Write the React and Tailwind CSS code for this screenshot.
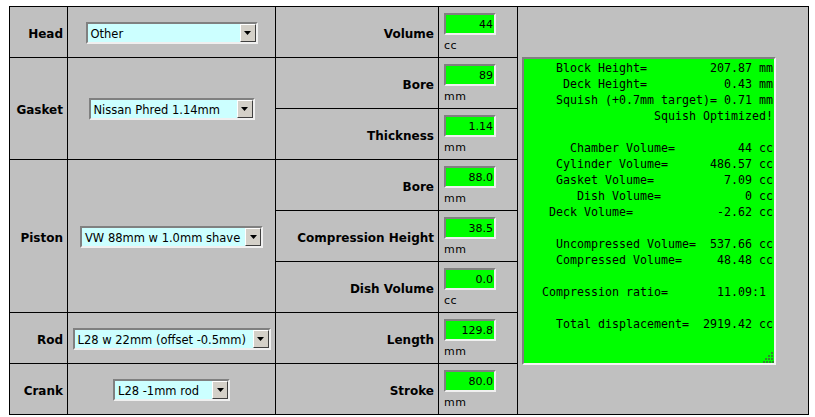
import React from "react";

const LINES = [
  [[2, "Block Height="], [24, "207.87 mm"]],
  [[3, "Deck Height="], [26, "0.43 mm"]],
  [[2, "Squish (+0.7mm target)= 0.71 mm"]],
  [[16, "Squish Optimized!"]],
  [],
  [[4, "Chamber Volume="], [28, "44 cc"]],
  [[2, "Cylinder Volume="], [24, "486.57 cc"]],
  [[2, "Gasket Volume="], [26, "7.09 cc"]],
  [[5, "Dish Volume="], [29, "0 cc"]],
  [[1, "Deck Volume="], [25, "-2.62 cc"]],
  [],
  [[2, "Uncompressed Volume="], [24, "537.66 cc"]],
  [[2, "Compressed Volume="], [25, "48.48 cc"]],
  [],
  [[0, "Compression ratio="], [25, "11.09:1"]],
  [],
  [[2, "Total displacement="], [23, "2919.42 cc"]],
];

function buildLine(parts) {
  let s = "";
  for (const [col, text] of parts) {
    while (s.length < col) s += " ";
    s += text;
  }
  return s || " ";
}

function Select({ text, width }) {
  return (
    <div
      className="flex h-[22px] border-2 border-t-[#808080] border-l-[#808080] border-b-[#f0f0f0] border-r-[#f0f0f0] bg-[#ccffff]"
      style={{ width }}
    >
      <div className="flex-1 pl-[3px] pt-[2px] text-[11.5px] leading-[16px] font-['DejaVu_Sans',sans-serif] text-black whitespace-nowrap overflow-hidden">
        {text}
      </div>
      <div className="w-[16px] h-[18px] bg-[#d4d0c8] border border-t-[#ffffff] border-l-[#ffffff] border-b-[#404040] border-r-[#404040] flex items-center justify-center">
        <svg width="7" height="4" viewBox="0 0 7 4">
          <polygon points="0,0 7,0 3.5,4" fill="#000" />
        </svg>
      </div>
    </div>
  );
}

function Label({ children, className = "" }) {
  return (
    <div
      className={
        "bg-[#c0c0c0] flex items-center justify-end pr-[4px] pt-[3px] text-[12px] font-bold font-['DejaVu_Sans',sans-serif] text-black whitespace-nowrap " +
        className
      }
    >
      {children}
    </div>
  );
}

function SelCell({ text, width, className = "" }) {
  return (
    <div className={"bg-[#c0c0c0] flex items-center justify-center pt-px " + className}>
      <Select text={text} width={width} />
    </div>
  );
}

function Val({ value, unit, className = "" }) {
  return (
    <div className={"bg-[#c0c0c0] flex flex-col pl-[5px] pt-[6px] " + className}>
      <div className="w-[52px] h-[22px] bg-[#00ff00] border-2 border-t-[#808080] border-l-[#808080] border-b-[#f0f0f0] border-r-[#f0f0f0] text-right pr-[1px] pt-[2px] text-[11px] leading-[16px] font-['DejaVu_Sans',sans-serif] text-black">
        {value}
      </div>
      <div className="mt-[4px] text-[11px] leading-[14px] font-['DejaVu_Sans',sans-serif] text-black tracking-[0.5px]">
        {unit}
      </div>
    </div>
  );
}

export default function App() {
  return (
    <div className="bg-white w-[815px] h-[417px] pt-[6px] pl-[9px]">
      <div className="grid w-[800px] bg-black p-px gap-px grid-cols-[57px_207px_162px_78px_290px] grid-rows-[repeat(8,50px)]">
        <Label className="col-start-1 row-start-1">Head</Label>
        <SelCell className="col-start-2 row-start-1" text="Other" width={172} />
        <Label className="col-start-3 row-start-1">Volume</Label>
        <Val className="col-start-4 row-start-1" value="44" unit="cc" />

        <div className="col-start-5 row-start-1 row-span-8 bg-[#c0c0c0] flex items-center pl-[4px]">
          <div className="relative w-[254px] h-[308px] bg-[#00ff00] border-2 border-t-[#808080] border-l-[#808080] border-b-[#f4f4f4] border-r-[#f4f4f4] overflow-hidden">
            <div className="pl-[18px] pt-px text-[11.63px] leading-[16px] font-['DejaVu_Sans_Mono',monospace] text-black whitespace-pre">
              {LINES.map((l, i) => (
                <div key={i} className="h-[16px]">{buildLine(l)}</div>
              ))}
            </div>
            <svg className="absolute right-0 bottom-0" width="12" height="12" viewBox="0 0 12 12">
              <rect x="9" y="1" width="2" height="2" fill="#2e8b2e" />
              <rect x="6" y="4" width="2" height="2" fill="#2e8b2e" />
              <rect x="9" y="4" width="2" height="2" fill="#2e8b2e" />
              <rect x="3" y="7" width="2" height="2" fill="#2e8b2e" />
              <rect x="6" y="7" width="2" height="2" fill="#2e8b2e" />
              <rect x="9" y="7" width="2" height="2" fill="#2e8b2e" />
              <rect x="1" y="10" width="2" height="2" fill="#2e8b2e" />
              <rect x="4" y="10" width="2" height="2" fill="#2e8b2e" />
              <rect x="7" y="10" width="2" height="2" fill="#2e8b2e" />
              <rect x="10" y="10" width="2" height="2" fill="#2e8b2e" />
            </svg>
          </div>
        </div>

        <Label className="col-start-1 row-start-2 row-span-2">Gasket</Label>
        <SelCell className="col-start-2 row-start-2 row-span-2" text="Nissan Phred 1.14mm" width={166} />
        <Label className="col-start-3 row-start-2">Bore</Label>
        <Val className="col-start-4 row-start-2" value="89" unit="mm" />
        <Label className="col-start-3 row-start-3">Thickness</Label>
        <Val className="col-start-4 row-start-3" value="1.14" unit="mm" />

        <Label className="col-start-1 row-start-4 row-span-3">Piston</Label>
        <SelCell className="col-start-2 row-start-4 row-span-3" text="VW 88mm w 1.0mm shave" width={183} />
        <Label className="col-start-3 row-start-4">Bore</Label>
        <Val className="col-start-4 row-start-4" value="88.0" unit="mm" />
        <Label className="col-start-3 row-start-5">Compression Height</Label>
        <Val className="col-start-4 row-start-5" value="38.5" unit="mm" />
        <Label className="col-start-3 row-start-6">Dish Volume</Label>
        <Val className="col-start-4 row-start-6" value="0.0" unit="cc" />

        <Label className="col-start-1 row-start-7">Rod</Label>
        <SelCell className="col-start-2 row-start-7" text="L28 w 22mm (offset -0.5mm)" width={198} />
        <Label className="col-start-3 row-start-7">Length</Label>
        <Val className="col-start-4 row-start-7" value="129.8" unit="mm" />

        <Label className="col-start-1 row-start-8">Crank</Label>
        <SelCell className="col-start-2 row-start-8" text="L28 -1mm rod" width={117} />
        <Label className="col-start-3 row-start-8">Stroke</Label>
        <Val className="col-start-4 row-start-8" value="80.0" unit="mm" />
      </div>
    </div>
  );
}
